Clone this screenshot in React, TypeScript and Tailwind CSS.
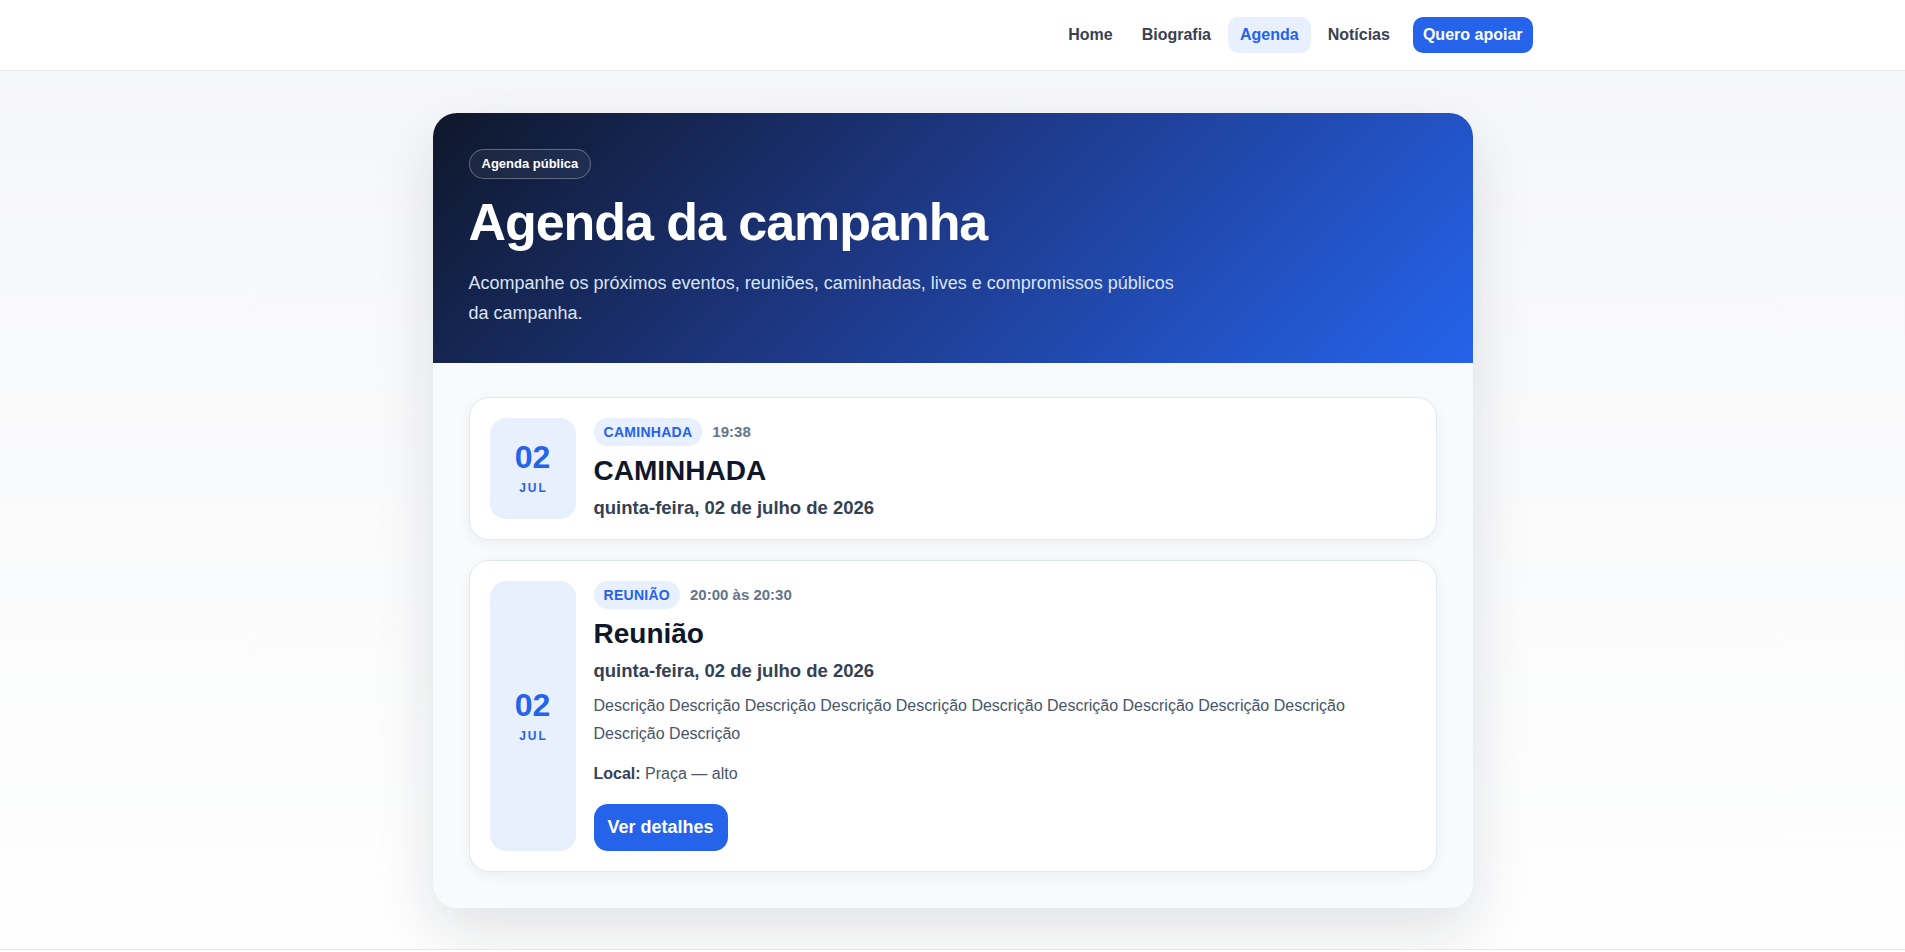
type Evento = {
  dia: string;
  mes: string;
  tipo: string;
  horario: string;
  titulo: string;
  data: string;
  descricao?: string;
  local?: string;
  detalhes?: boolean;
};

const eventos: Evento[] = [
  {
    dia: "02",
    mes: "JUL",
    tipo: "CAMINHADA",
    horario: "19:38",
    titulo: "CAMINHADA",
    data: "quinta-feira, 02 de julho de 2026",
  },
  {
    dia: "02",
    mes: "JUL",
    tipo: "REUNIÃO",
    horario: "20:00 às 20:30",
    titulo: "Reunião",
    data: "quinta-feira, 02 de julho de 2026",
    descricao: Array(12).fill("Descrição").join(" "),
    local: "Praça — alto",
    detalhes: true,
  },
];

const links = ["Home", "Biografia", "Agenda", "Notícias"];

const Header = () => (
  <header className="bg-white border-b border-[#e5e7eb]">
    <div className="max-w-[1200px] mx-auto px-5 h-[70px] flex items-center justify-end">
      <nav className="flex items-center gap-[5px]">
        {links.map((link) => (
          <a
            key={link}
            href="#"
            className={
              link === "Agenda"
                ? "h-9 px-3 flex items-center rounded-[10px] bg-[#e8effd] text-[#2563eb] text-[16px] font-bold"
                : "h-9 px-3 flex items-center rounded-[10px] text-[#374151] text-[16px] font-bold"
            }
          >
            {link}
          </a>
        ))}
        <a
          href="#"
          className="ml-1.5 h-9 px-2.5 flex items-center rounded-[10px] bg-[#2563eb] text-white text-[16px] font-bold"
        >
          Quero apoiar
        </a>
      </nav>
    </div>
  </header>
);

const EventoCard = ({ evento }: { evento: Evento }) => (
  <article className="flex gap-[18px] p-5 bg-white border border-[#e2e8f0] rounded-[20px] shadow-[0_4px_14px_rgba(15,23,42,0.05)]">
    <div className="w-[86px] shrink-0 rounded-2xl bg-[#e8effd] flex flex-col items-center justify-center text-[#2563eb]">
      <span className="text-[32px] leading-8 font-bold">{evento.dia}</span>
      <span className="mt-[7px] text-[12px] leading-4 font-bold tracking-[0.16em] pl-[0.16em]">
        {evento.mes}
      </span>
    </div>

    <div className="flex-1 min-w-0">
      <div className="flex items-center gap-2.5">
        <span className="h-7 px-2.5 flex items-center rounded-full bg-[#e8effd] text-[#2563eb] text-[14px] font-bold tracking-[0.02em]">
          {evento.tipo}
        </span>
        <span className="text-[15px] font-bold text-[#64748b]">{evento.horario}</span>
      </div>
      <h2 className="mt-2 text-[28px] leading-[34px] font-bold text-[#0f172a]">
        {evento.titulo}
      </h2>
      <p className="mt-2 text-[18.5px] leading-[23px] font-bold text-[#334155]">{evento.data}</p>
      {evento.descricao && (
        <p className="mt-2.5 text-[16px] leading-7 text-[#475569]">{evento.descricao}</p>
      )}
      {evento.local && (
        <p className="mt-3 text-[16px] leading-7 text-[#475569]">
          <strong className="text-[#334155]">Local:</strong> {evento.local}
        </p>
      )}
      {evento.detalhes && (
        <button className="mt-4 h-[47px] px-[14px] rounded-[14px] bg-[#2563eb] text-white text-[18px] font-bold">
          Ver detalhes
        </button>
      )}
    </div>
  </article>
);

export default function App() {
  return (
    <div
      className="min-h-screen bg-[linear-gradient(180deg,#f5f6f8_0%,#ffffff_100%)]"
      style={{ fontFamily: '"Liberation Sans", Arial, sans-serif' }}
    >
      <Header />

      <main className="px-5 pt-[42px] pb-[41px]">
        <section className="max-w-[1040px] mx-auto rounded-3xl overflow-hidden bg-[#f8fafc] shadow-[0_24px_60px_rgba(15,23,42,0.12)]">
          <div className="px-9 pt-9 pb-[35px] bg-[linear-gradient(135deg,#0f172a_0%,#1e3a8a_48%,#2563eb_100%)] text-white">
            <span className="inline-flex items-center h-[30px] px-3 rounded-full border border-white/30 bg-white/5 text-[13px] font-bold">
              Agenda pública
            </span>
            <h1 className="mt-[15px] text-[52px] leading-[57px] font-bold tracking-[-0.02em]">
              Agenda da campanha
            </h1>
            <p className="mt-[17px] max-w-[720px] text-[18px] leading-[30px] text-[#dbe4f7]">
              Acompanhe os próximos eventos, reuniões, caminhadas, lives e compromissos públicos da
              campanha.
            </p>
          </div>

          <div className="px-9 pt-[34px] pb-9 flex flex-col gap-5">
            {eventos.map((evento) => (
              <EventoCard key={evento.tipo} evento={evento} />
            ))}
          </div>
        </section>
      </main>

      <footer className="border-t border-[#e5e7eb] bg-white h-20" />
    </div>
  );
}
